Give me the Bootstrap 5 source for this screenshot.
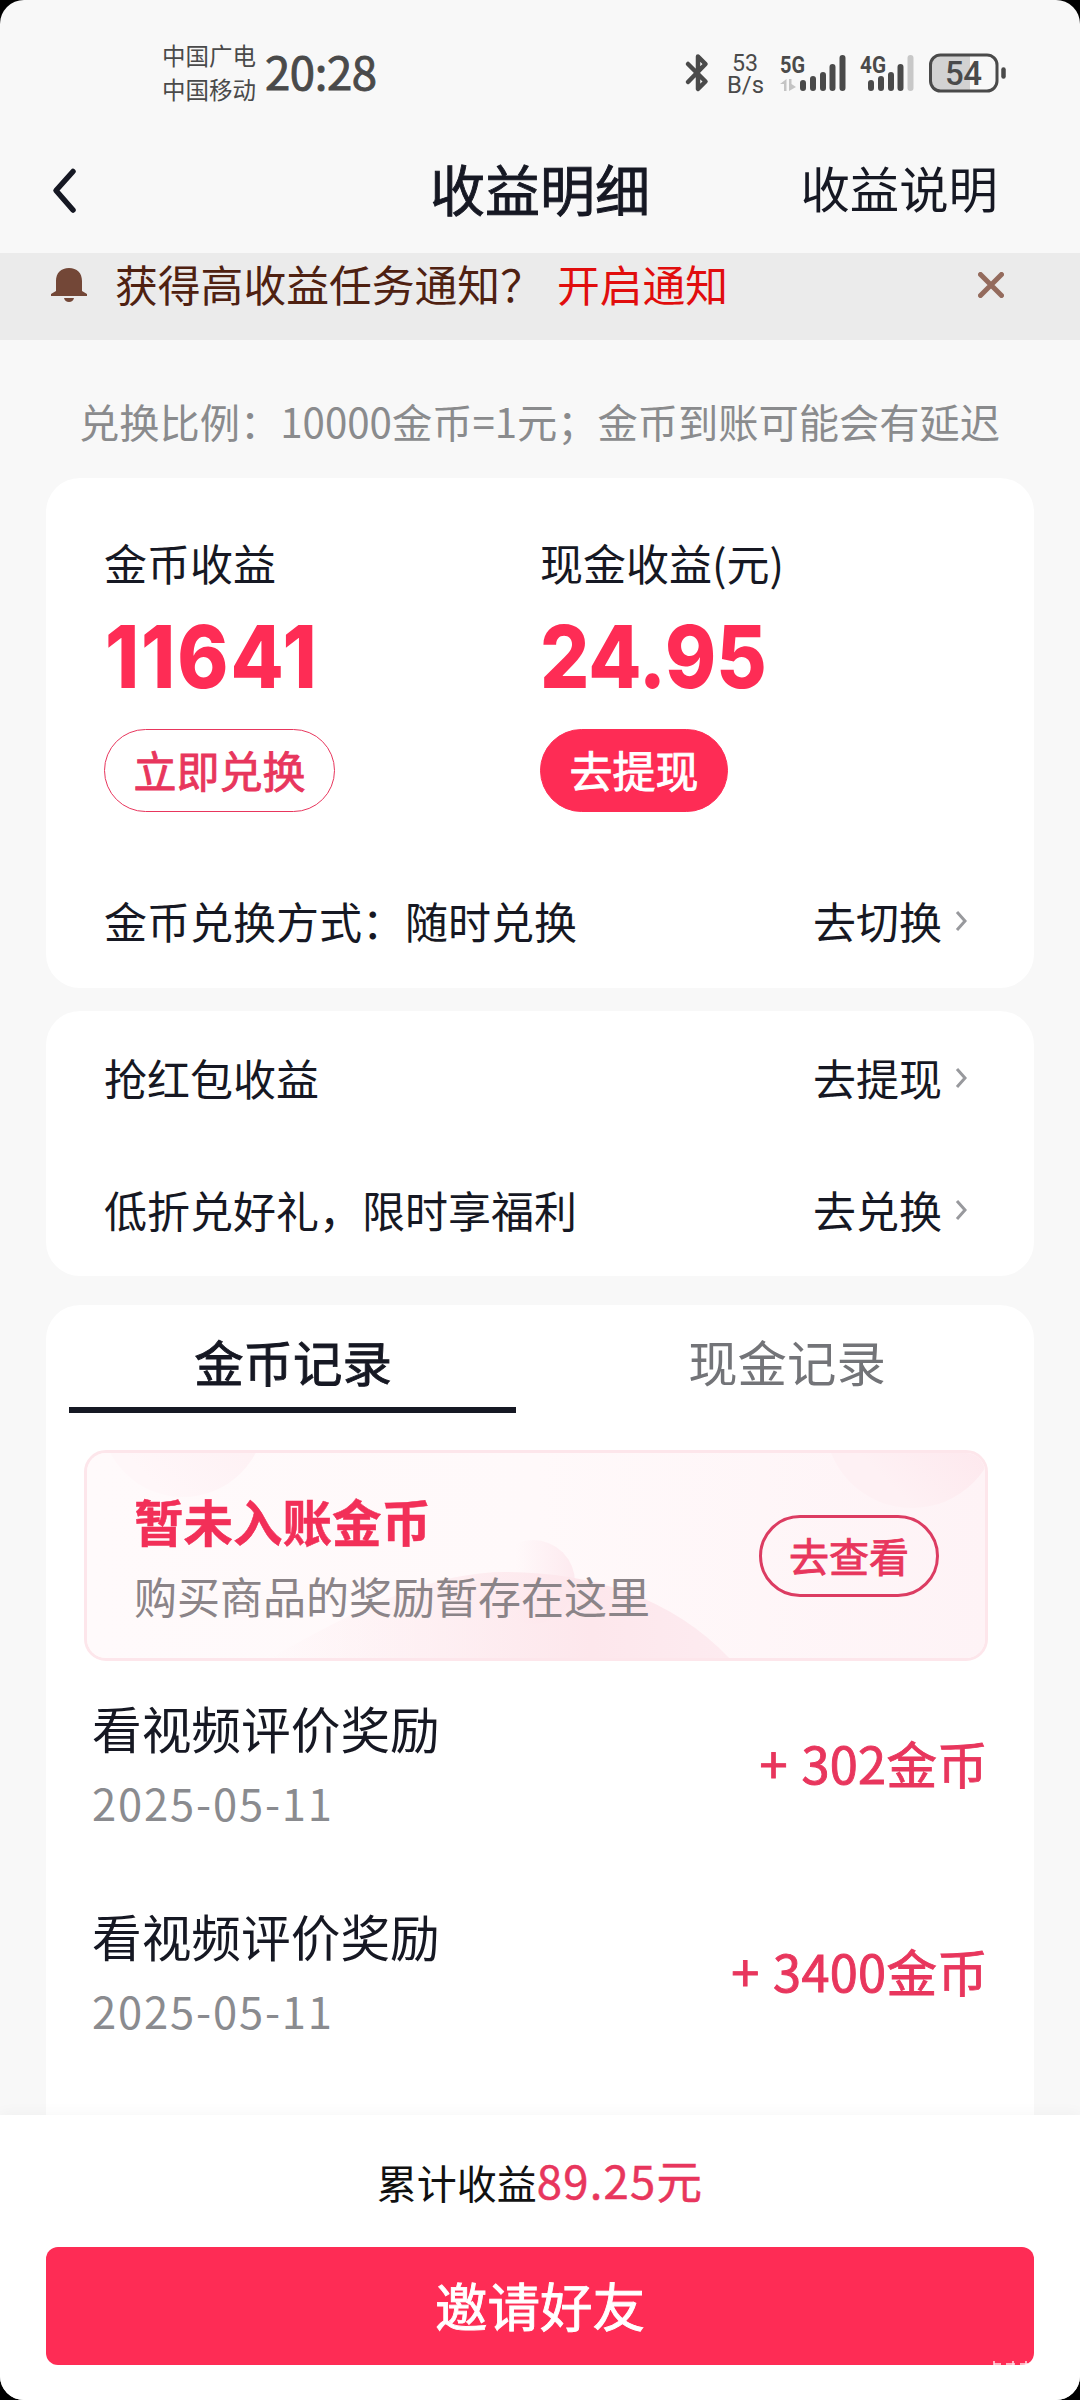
<!DOCTYPE html>
<html lang="zh-CN">
<head>
<meta charset="utf-8">
<meta name="viewport" content="width=device-width, initial-scale=1">
<title>收益明细</title>
<link href="https://cdn.jsdelivr.net/npm/bootstrap@5.3.0/dist/css/bootstrap.min.css" rel="stylesheet">
<style>
:root{--pink:#fe2c55;--rose:#e8365d;--ink:#161823}
html{background:#000}
body{margin:0;background:#000;font-family:"Noto Sans CJK SC",sans-serif;color:var(--ink);line-height:1}
.screen{width:1080px;height:2400px;background:#f8f8f8;border-radius:24px;overflow:hidden;white-space:nowrap}
svg{display:block;flex:none}
.medium{-webkit-text-stroke:.9px currentColor}
.statusbar{height:120px;padding:0 62px 0 162px;color:#4a4a4a}
.carriers{font-size:23.5px;line-height:34px;padding-top:38px;width:103px}
.clock{font-size:45.5px;line-height:60px;padding-top:40px;letter-spacing:-.4px}
.titlebar{height:133px}
.titlebar>*{width:360px}
.page-title{font-size:55px;line-height:60px;margin-top:1px}
.help{font-size:49.4px;line-height:60px;padding-right:82px;margin-top:1px}
.notice{height:87px;background:#ebebeb;padding:0 76px 0 51px;font-size:42.8px;color:#4f2111}
.notice .line{height:64px;line-height:64px}
.notice .question{margin:-5px 0 0 -2px}
.notice .enable{margin:-5px 0 0 14px;color:#e10d0d}
.ratio{height:138px;padding-left:79px;font-size:40.25px;line-height:162px;color:#8a8b8d}
.panel{margin:0 46px;border-radius:34px;background:#fff}
.fs-row{font-size:43px}
.sum{height:510px;padding:58px 59px 0 58px}
.sum .col-a{width:436px}
.sum .cap{line-height:52px}
.amount{font-family:Inter,sans-serif;font-weight:800;font-size:87px;line-height:86px;color:var(--pink);margin-top:26px;transform:scaleX(.89);transform-origin:0 50%;height:86px}
.amount.coins{letter-spacing:2.3px;padding-left:1px}
.pill{height:83px;border-radius:42px;font-size:43px;line-height:1;padding:0 28.5px 2px;border:1.5px solid var(--rose);color:var(--rose);background:transparent;display:inline-flex;align-items:center;margin-top:29px}
.pill.solid{background:var(--pink);border-color:var(--pink);color:#fff}
.sum .switch-row{margin-top:78px;height:60px;padding-right:8px}
.line-row{height:132px;padding:0 67px 0 58px}
.line-row span,.switch-row span{line-height:60px}
.next{gap:13px}
.next svg{margin-top:1px}
.pair{margin-top:23px;height:265px}
.tabs{height:108px}
.tabs .tab{width:494px;font-size:49.4px;line-height:111px;text-align:center}
.underline{width:447px;height:6px;background:var(--ink);margin-left:23px;margin-top:-6px}
.promo{height:211px;margin:37px 46px 0 38px;border:3px solid #fde6eb;border-radius:22px;background:#fff7f8;overflow:hidden;position:relative}
.promo .art{position:absolute;left:0;top:0}
.promo .words{position:relative;height:100%;padding:0 46px 0 47px}
.promo-title{font-size:49.5px;line-height:60px;font-weight:700;color:#f22f58;margin-top:4px;-webkit-text-stroke:.5px}
.promo-sub{font-size:43px;line-height:60px;color:#8b8488;margin-top:14px}
.see{height:82px;border-radius:41px;border:3px solid #dc3c62;color:#e8365d;font-size:40px;padding:0 27px 2px;margin-top:0}
.record{height:208px;padding:0 46px 0 46px}
.record .what{font-size:49.7px;line-height:60px;margin-top:36px}
.record .date{font-size:43.5px;line-height:50px;color:#8a8b8f;letter-spacing:1.85px;margin-top:21px}
.record .gain{font-size:50.5px;line-height:60px;color:var(--rose);letter-spacing:.3px;word-spacing:2px;margin-top:71px}
.footer-bar{height:285px;background:#fff;box-shadow:0 -2px 14px rgba(0,0,0,.035);position:relative}
.total{height:132px;line-height:128px;font-size:40px;color:#111}
.total b{font-weight:400;font-size:45.5px;color:var(--rose);letter-spacing:1.2px;-webkit-text-stroke:.5px}
.invite{margin:0 46px;height:118px;border-radius:12px;background:var(--pink);color:#fff;font-size:52.5px;padding-bottom:3px;position:relative}
.cut-mark{position:absolute;right:5px;bottom:0}
.list-panel{height:810px;margin-top:29px;border-radius:34px 34px 0 0}
</style>
</head>
<body>
<main class="screen d-flex flex-column">
  <div class="statusbar d-flex">
    <div class="carriers">中国广电<br>中国移动</div>
    <div class="clock medium">20:28</div>
    <svg class="ms-auto" width="336" height="120" viewBox="682 0 336 120" fill="none" stroke="#4a4a4a" font-family="Roboto,sans-serif">
      <path d="M688 64L705.500 81.500L698 89V56.500L705.500 64L688 82" stroke-width="4.500" stroke-linejoin="round" stroke-linecap="round"/>
      <g fill="#4a4a4a" stroke="none">
        <text x="732" y="70.500" font-size="24" textLength="26" lengthAdjust="spacingAndGlyphs">53</text>
        <text x="727" y="93" font-size="24.500" textLength="37" lengthAdjust="spacingAndGlyphs">B/s</text>
        <text x="780" y="72.500" font-size="24" font-weight="700" textLength="25" lengthAdjust="spacingAndGlyphs">5G</text>
        <text x="860" y="72.500" font-size="24" font-weight="700" textLength="26" lengthAdjust="spacingAndGlyphs">4G</text>
      </g>
      <g stroke-width="6" stroke-linecap="round">
        <path d="M803 83V88M813 79V88M823 75V88M832.500 67V88M842.500 58V88"/>
        <path d="M871 83V88M881 79V88M891 75V88M900.500 67V88"/>
        <path d="M910.500 58V88" stroke="#c8c8c8"/>
      </g>
      <path d="M780 84L786.500 79V91H784V84ZM789 79H791.500V84L796 87L789 91Z" fill="#c4c4c4" stroke="none"/>
      <path d="M941 56H970V91H941Q931 91 931 81V66Q931 56 941 56Z" fill="#d2d2d2" stroke="none"/>
      <rect x="930.500" y="55" width="66.500" height="36" rx="10" stroke-width="3"/>
      <path d="M1003.500 69.500V76.500" stroke-width="4.500" stroke-linecap="round"/>
      <text x="963.500" y="84.500" text-anchor="middle" font-size="33" font-weight="500" textLength="37" fill="#4a4a4a" stroke="none">54</text>
    </svg>
  </div>
  <header class="titlebar d-flex align-items-center">
    <div><svg width="90" height="60" viewBox="0 156.500 90 60"><path d="M73 171L56 190L73 209.500" fill="none" stroke="#161823" stroke-width="5.500" stroke-linecap="round" stroke-linejoin="round"/></svg></div>
    <div class="page-title medium text-center">收益明细</div>
    <div class="help text-end">收益说明</div>
  </header>
  <div class="notice">
    <div class="line d-flex align-items-center">
      <svg width="66" height="34" viewBox="0 0 66 34" fill="#734737"><path d="M0 28V26L5 23V13C5 5 10 0 18 0S31 5 31 13V23L36 26V28Z"/><path d="M13 30H23Q22 34 18 34T13 30Z"/></svg>
      <span class="question">获得高收益任务通知？</span><span class="enable">开启通知</span>
      <svg class="ms-auto" width="26" height="26" viewBox="0 0 26 26"><path d="M2.500 2.500L23.500 23.500M23.500 2.500L2.500 23.500" stroke="#946b5d" stroke-width="5" stroke-linecap="round"/></svg>
    </div>
  </div>
  <div class="ratio">兑换比例：10000金币=1元；金币到账可能会有延迟</div>

  <section class="panel sum">
    <div class="d-flex fs-row">
      <div class="col-a"><div class="cap">金币收益</div><div class="amount coins">11641</div><button class="pill medium">立即兑换</button></div>
      <div><div class="cap">现金收益(元)</div><div class="amount">24.95</div><button class="pill solid medium">去提现</button></div>
    </div>
    <div class="switch-row d-flex align-items-center justify-content-between fs-row"><span>金币兑换方式：随时兑换</span>
      <span class="next d-flex align-items-center">去切换<svg width="12" height="22" viewBox="0 0 12 22"><path d="M2 2L10 11L2 20" fill="none" stroke="#98999d" stroke-width="3"/></svg></span></div>
  </section>

  <section class="panel pair fs-row">
    <div class="line-row d-flex align-items-center justify-content-between"><span>抢红包收益</span><span class="next d-flex align-items-center">去提现<svg width="12" height="22" viewBox="0 0 12 22"><path d="M2 2L10 11L2 20" fill="none" stroke="#98999d" stroke-width="3"/></svg></span></div>
    <div class="line-row d-flex align-items-center justify-content-between"><span>低折兑好礼，限时享福利</span><span class="next d-flex align-items-center">去兑换<svg width="12" height="22" viewBox="0 0 12 22"><path d="M2 2L10 11L2 20" fill="none" stroke="#98999d" stroke-width="3"/></svg></span></div>
  </section>

  <section class="panel list-panel">
    <nav class="tabs d-flex"><div class="tab medium">金币记录</div><div class="tab" style="color:#737478">现金记录</div></nav>
    <div class="underline"></div>
    <div class="promo">
      <svg class="art" width="900" height="207" viewBox="0 0 900 207">
        <defs>
          <linearGradient id="wash"><stop stop-color="#fffafb"/><stop offset=".5" stop-color="#fff9fa"/><stop offset="1" stop-color="#fef3f6"/></linearGradient>
          <linearGradient id="hill"><stop stop-color="#fde6eb" stop-opacity="0"/><stop offset=".7" stop-color="#fde7ec"/><stop offset="1" stop-color="#fdebf0"/></linearGradient>
          <linearGradient id="bump"><stop offset=".3" stop-color="#fdeaef" stop-opacity="0"/><stop offset="1" stop-color="#fdeaef"/></linearGradient>
          <linearGradient id="orb" x1="1" y1="0" x2="0" y2="1"><stop stop-color="#fddfe7"/><stop offset=".75" stop-color="#fef1f4"/></linearGradient>
          <linearGradient id="dome" x1="1" y1="0" x2="0" y2="1"><stop stop-color="#fdecf0"/><stop offset=".8" stop-color="#fff7f9"/></linearGradient>
        </defs>
        <rect width="900" height="207" fill="url(#wash)"/>
        <circle cx="96" cy="-38" r="82" fill="url(#dome)"/>
        <circle cx="825" cy="-32" r="87" fill="url(#orb)"/>
        <circle cx="446" cy="129" r="42" fill="url(#bump)"/>
        <path d="M180 207C280 150 350 119 418 119C505 119 587 145 644 207Z" fill="url(#hill)"/>
      </svg>
      <div class="words d-flex justify-content-between align-items-center">
        <div><div class="promo-title">暂未入账金币</div><div class="promo-sub">购买商品的奖励暂存在这里</div></div>
        <button class="pill see medium">去查看</button>
      </div>
    </div>
    <div class="record d-flex justify-content-between">
      <div><div class="what">看视频评价奖励</div><div class="date">2025-05-11</div></div><div class="gain medium">+ 302金币</div>
    </div>
    <div class="record d-flex justify-content-between">
      <div><div class="what">看视频评价奖励</div><div class="date">2025-05-11</div></div><div class="gain medium">+ 3400金币</div>
    </div>
  </section>

  <footer class="footer-bar">
    <div class="total text-center">累计收益<b>89.25元</b></div>
    <div class="invite medium d-flex align-items-center justify-content-center">邀请好友
      <svg class="cut-mark" width="36" height="4" viewBox="0 0 36 4" stroke="#fff" stroke-width="1.500"><path d="M1 0V4M1 3H8M13 3H22M20 0V4M27 3H35M33 0V4" opacity=".85"/></svg>
    </div>
  </footer>
</main>
<script src="https://cdn.jsdelivr.net/npm/bootstrap@5.3.0/dist/js/bootstrap.bundle.min.js"></script>
</body>
</html>
